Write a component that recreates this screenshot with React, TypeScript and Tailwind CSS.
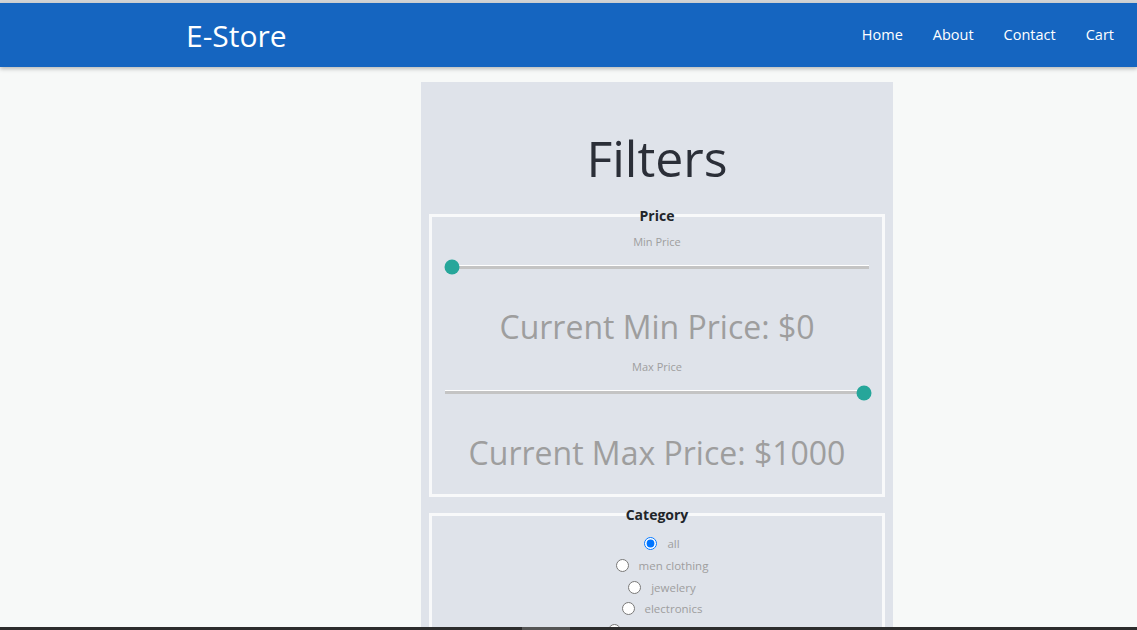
const categories = ["all", "men clothing", "jewelery", "electronics", "women clothing"];

function Slider({ value }: { value: number }) {
  return (
    <div className="relative mx-[13px] h-[4px] border-t border-white bg-[#c4c4c4]">
      <div
        className="absolute top-1/2 h-[15px] w-[15px] -translate-x-1/2 -translate-y-1/2 rounded-full bg-[#26a69a]"
        style={{ left: `calc(7px + ${value} * (100% - 12px))` }}
      />
    </div>
  );
}

export default function App() {
  return (
    <div
      className="flex h-[630px] flex-col overflow-hidden bg-[#f7f9f8]"
      style={{ fontFamily: '"Open Sans", "Noto Sans", sans-serif' }}
    >
      <div className="h-[3px] bg-[#d2d4d6]" />
      <nav className="relative z-10 flex h-[64px] items-center justify-between bg-[#1565c0] pl-[186px] pr-[23px] shadow-[0_2px_4px_rgba(0,0,0,0.25)]">
        <span className="text-[30px] text-white">E-Store</span>
        <ul className="flex gap-[30px] text-[14.5px] text-white">
          <li>Home</li>
          <li>About</li>
          <li>Contact</li>
          <li>Cart</li>
        </ul>
      </nav>

      <main className="flex-1 overflow-hidden pt-[15px]">
        <aside className="ml-[421px] w-[472px] bg-[#dfe3ea] px-[8px] pt-[46px] pb-6">
          <h1 className="text-center text-[50px] leading-[60px] text-[#2b2f38]">Filters</h1>

          <fieldset className="mt-[17px] border-[3px] border-[#f8f9fa] pb-[19px]">
            <legend className="mx-auto px-0 text-[14px] font-bold text-[#212529]">Price</legend>
            <p className="mt-[8px] text-center text-[11px] text-[#9e9e9e]">Min Price</p>
            <div className="mt-[14px]">
              <Slider value={0} />
            </div>
            <p className="mt-[36px] text-center text-[32px] leading-[44px] text-[#9e9e9e]">
              Current Min Price: $0
            </p>
            <p className="mt-[10px] text-center text-[11px] text-[#9e9e9e]">Max Price</p>
            <div className="mt-[15px]">
              <Slider value={1} />
            </div>
            <p className="mt-[37px] text-center text-[32px] leading-[44px] text-[#9e9e9e]">
              Current Max Price: $1000
            </p>
          </fieldset>

          <fieldset className="mt-[7px] border-[3px] border-[#f8f9fa]">
            <legend className="mx-auto px-0 text-[14px] font-bold text-[#212529]">Category</legend>
            <div className="mt-[8px] flex flex-col items-center pl-[10px]">
              {categories.map((c) => (
                <label key={c} className="flex h-[21.7px] items-center gap-[10px] text-[11.5px] text-[#9e9e9e]">
                  <input type="radio" name="category" defaultChecked={c === "all"} className="m-0" />
                  {c}
                </label>
              ))}
            </div>
          </fieldset>
        </aside>
      </main>

      <div className="flex h-[3px] bg-[#2d2d2d]">
        <div className="ml-[522px] w-[48px] bg-[#555555]" />
      </div>
    </div>
  );
}
